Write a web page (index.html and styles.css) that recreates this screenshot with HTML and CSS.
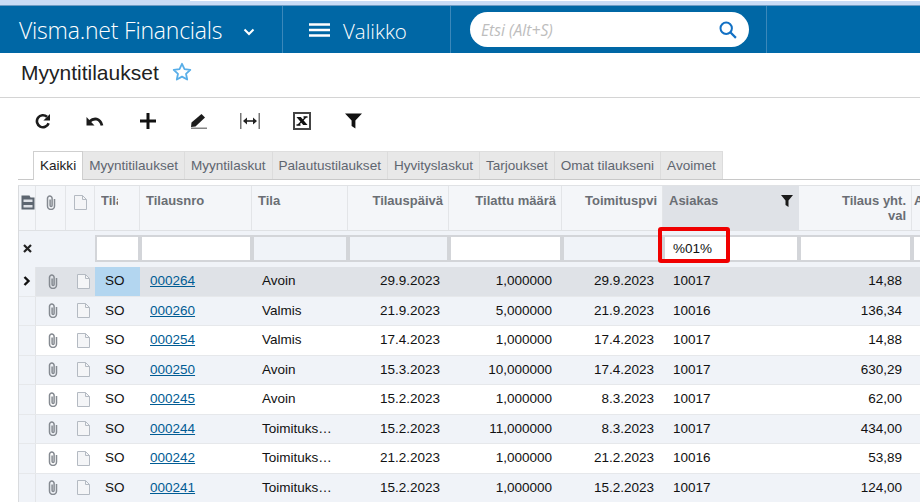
FILE: index.html
```html
<!DOCTYPE html>
<html lang="fi">

<head>
  <meta charset="UTF-8" />
  <title>Myyntitilaukset</title>
  <link rel="stylesheet" href="styles.css">
</head>

<body>

  <svg class="defs" width="0" height="0">
    <symbol id="clip" viewBox="0 0 10 15">
      <path d="M8.500 4v7a3.500 3.500 0 0 1-7 0V3.300a2.300 2.300 0 0 1 4.600 0v7.200a1 1 0 0 1-2 0V4.500" fill="none" stroke="#858a91" stroke-width="1.500" />
    </symbol>
    <symbol id="doc" viewBox="0 0 13 15">
      <path d="M.5.5h8l4 4v10H.5z" fill="#f4f5f7" stroke="#b4bac2" />
      <path d="M8.500.5v4h4" fill="none" stroke="#b4bac2" />
    </symbol>
  </svg>

  <div class="topstrip"><span class="topstrip-white"></span></div>

  <header class="appbar">
    <div class="brand">
      <span class="brand-name">Visma.net Financials</span>
      <svg width="12" height="8" viewBox="0 0 12 8"><path d="M1.500 1.500 6 6l4.500-4.500" fill="none" stroke="#fff" stroke-width="2" /></svg>
    </div>
    <div class="menu">
      <svg width="21" height="14" viewBox="0 0 21 14"><path d="M0 1.500h21M0 7h21M0 12.500h21" stroke="#fff" stroke-width="2.400" /></svg>
      <span>Valikko</span>
    </div>
    <div class="searchwrap">
      <div class="search">
        <span class="search-text">Etsi (Alt+S)</span>
        <svg width="18" height="18" viewBox="0 0 18 18"><circle cx="7.200" cy="7.200" r="5.700" fill="none" stroke="#1170c4" stroke-width="2" /><path d="m11.300 11.300 5.600 5.600" stroke="#1170c4" stroke-width="2.200" /></svg>
      </div>
    </div>
    <div class="barrest"></div>
  </header>

  <div class="titlebar">
    <h1>Myyntitilaukset</h1>
    <svg width="20" height="19" viewBox="0 0 20 19"><path d="m10 1.800 2.500 5.300 5.800.7-4.300 4 1.200 5.700-5.200-2.900-5.200 2.900L6 11.800l-4.300-4 5.800-.7z" fill="none" stroke="#58aee8" stroke-width="1.800" stroke-linejoin="round" /></svg>
  </div>

  <div class="toolbar">
    <span class="tool"><svg width="16" height="16" viewBox="0 0 16 16"><path d="M13.600 10.200A6 6 0 1 1 12 3.800" fill="none" stroke="#1c1c1c" stroke-width="2.600" /><path d="M15 1v6.600H8.400z" fill="#1c1c1c" /></svg></span>
    <span class="tool"><svg width="18" height="12" viewBox="0 0 18 12"><path d="M3.500 6.500C8 2.500 14 3 16 10.500" fill="none" stroke="#1c1c1c" stroke-width="2.800" /><path d="M.5 2v8.500H8.500z" fill="#1c1c1c" /></svg></span>
    <span class="tool tool-plus"><svg width="16" height="16" viewBox="0 0 16 16"><path d="M8 0v16M0 8h16" stroke="#111" stroke-width="3" /></svg></span>
    <span class="tool"><svg width="17" height="16" viewBox="0 0 17 16"><path d="M11.500 1 15 4.500 5.500 13.500 1 14l.5-4.500z" fill="#1c1c1c" /><path d="M1 15.200h16" stroke="#666" stroke-width="1.200" /></svg></span>
    <span class="tool"><svg width="20" height="16" viewBox="0 0 20 16"><path d="M.8 0v16M19.200 0v16" stroke="#555" stroke-width="1.200" /><path d="M4 8h12" stroke="#222" stroke-width="1.600" /><path d="M7 4.500 3 8l4 3.500zM13 4.500l4 3.500-4 3.500z" fill="#222" /></svg></span>
    <span class="tool"><svg width="18" height="18" viewBox="0 0 18 18"><rect x="1" y="1" width="16" height="16" fill="#fff" stroke="#444" stroke-width="2" /><path d="M3.500 5h4.300l6.700 8h-4.300z" fill="#111" /><path d="M13 5 5 13M3.500 13h4M10.500 5h4" stroke="#111" stroke-width="1.300" /></svg></span>
    <span class="tool"><svg width="17" height="16" viewBox="0 0 17 16"><path d="M0 .5h17l-6.600 7v8l-3.800-2.500V7.500z" fill="#111" /></svg></span>
  </div>

  <nav class="tabs">
    <span class="tab active">Kaikki</span>
    <span class="tab">Myyntitilaukset</span>
    <span class="tab">Myyntilaskut</span>
    <span class="tab">Palautustilaukset</span>
    <span class="tab">Hyvityslaskut</span>
    <span class="tab">Tarjoukset</span>
    <span class="tab">Omat tilaukseni</span>
    <span class="tab">Avoimet</span>
  </nav>

  <div class="grid">
    <div class="row head">
      <div class="c stack"><svg class="h-ico" width="14" height="15" viewBox="0 0 14 15"><path d="M.5.5h8l1 2h4v12H.5z" fill="#5d6670" /><path d="M2.500 4.500h9v2.500h-9zM2.500 10h9v2.500h-9z" fill="#dfe2e7" /></svg></div>
      <div class="c"><svg class="h-ico" width="10" height="15"><use href="#clip" /></svg></div>
      <div class="c"><svg class="h-ico" width="13" height="15"><use href="#doc" /></svg></div>
      <div class="c l"><span class="cut">Tila</span></div>
      <div class="c l">Tilausnro</div>
      <div class="c l">Tila</div>
      <div class="c r">Tilauspäivä</div>
      <div class="c r">Tilattu määrä</div>
      <div class="c r">Toimituspvi</div>
      <div class="c l sorted">Asiakas
        <svg class="col-filter" width="12" height="12" viewBox="0 0 12 12"><path d="M0 0h12L7.500 5.500V12l-3-2V5.500z" fill="#1a1a1a" /></svg>
      </div>
      <div class="c r">Tilaus yht.<br>val</div>
      <div class="c edge">A</div>
    </div>

    <div class="row filter">
      <div class="c x"><svg width="9" height="9" viewBox="0 0 9 9"><path d="m1 1 7 7M8 1 1 8" stroke="#222" stroke-width="2.200" /></svg></div>
      <div class="c"></div>
      <div class="c"></div>
      <div class="c f"></div>
      <div class="c f"></div>
      <div class="c f off"></div>
      <div class="c f off"></div>
      <div class="c f"></div>
      <div class="c f off"></div>
      <div class="c f">%01%<span class="redbox"></span></div>
      <div class="c f"></div>
      <div class="c f"></div>
    </div>

    <div class="row data current">
      <div class="c mark"><svg width="8" height="10" viewBox="0 0 8 10"><path d="m1.500 1 4 4-4 4" fill="none" stroke="#111" stroke-width="2.400" /></svg></div>
      <div class="c i"><svg width="10" height="15"><use href="#clip" /></svg></div>
      <div class="c d"><svg width="13" height="15"><use href="#doc" /></svg></div>
      <div class="c so">SO</div>
      <div class="c"><a href="#">000264</a></div>
      <div class="c">Avoin</div>
      <div class="c n">29.9.2023</div>
      <div class="c n wide">1,000000</div>
      <div class="c n">29.9.2023</div>
      <div class="c">10017</div>
      <div class="c n wide">14,88</div>
      <div class="c"></div>
    </div>

    <div class="row data alt">
      <div class="c mark"></div>
      <div class="c i"><svg width="10" height="15"><use href="#clip" /></svg></div>
      <div class="c d"><svg width="13" height="15"><use href="#doc" /></svg></div>
      <div class="c">SO</div>
      <div class="c"><a href="#">000260</a></div>
      <div class="c">Valmis</div>
      <div class="c n">21.9.2023</div>
      <div class="c n wide">5,000000</div>
      <div class="c n">21.9.2023</div>
      <div class="c">10016</div>
      <div class="c n wide">136,34</div>
      <div class="c"></div>
    </div>

    <div class="row data">
      <div class="c mark"></div>
      <div class="c i"><svg width="10" height="15"><use href="#clip" /></svg></div>
      <div class="c d"><svg width="13" height="15"><use href="#doc" /></svg></div>
      <div class="c">SO</div>
      <div class="c"><a href="#">000254</a></div>
      <div class="c">Valmis</div>
      <div class="c n">17.4.2023</div>
      <div class="c n wide">1,000000</div>
      <div class="c n">17.4.2023</div>
      <div class="c">10017</div>
      <div class="c n wide">14,88</div>
      <div class="c"></div>
    </div>

    <div class="row data alt">
      <div class="c mark"></div>
      <div class="c i"><svg width="10" height="15"><use href="#clip" /></svg></div>
      <div class="c d"><svg width="13" height="15"><use href="#doc" /></svg></div>
      <div class="c">SO</div>
      <div class="c"><a href="#">000250</a></div>
      <div class="c">Avoin</div>
      <div class="c n">15.3.2023</div>
      <div class="c n wide">10,000000</div>
      <div class="c n">17.4.2023</div>
      <div class="c">10017</div>
      <div class="c n wide">630,29</div>
      <div class="c"></div>
    </div>

    <div class="row data">
      <div class="c mark"></div>
      <div class="c i"><svg width="10" height="15"><use href="#clip" /></svg></div>
      <div class="c d"><svg width="13" height="15"><use href="#doc" /></svg></div>
      <div class="c">SO</div>
      <div class="c"><a href="#">000245</a></div>
      <div class="c">Avoin</div>
      <div class="c n">15.2.2023</div>
      <div class="c n wide">1,000000</div>
      <div class="c n">8.3.2023</div>
      <div class="c">10017</div>
      <div class="c n wide">62,00</div>
      <div class="c"></div>
    </div>

    <div class="row data alt">
      <div class="c mark"></div>
      <div class="c i"><svg width="10" height="15"><use href="#clip" /></svg></div>
      <div class="c d"><svg width="13" height="15"><use href="#doc" /></svg></div>
      <div class="c">SO</div>
      <div class="c"><a href="#">000244</a></div>
      <div class="c">Toimituks…</div>
      <div class="c n">15.2.2023</div>
      <div class="c n wide">11,000000</div>
      <div class="c n">8.3.2023</div>
      <div class="c">10017</div>
      <div class="c n wide">434,00</div>
      <div class="c"></div>
    </div>

    <div class="row data">
      <div class="c mark"></div>
      <div class="c i"><svg width="10" height="15"><use href="#clip" /></svg></div>
      <div class="c d"><svg width="13" height="15"><use href="#doc" /></svg></div>
      <div class="c">SO</div>
      <div class="c"><a href="#">000242</a></div>
      <div class="c">Toimituks…</div>
      <div class="c n">21.2.2023</div>
      <div class="c n wide">1,000000</div>
      <div class="c n">21.2.2023</div>
      <div class="c">10016</div>
      <div class="c n wide">53,89</div>
      <div class="c"></div>
    </div>

    <div class="row data alt">
      <div class="c mark"></div>
      <div class="c i"><svg width="10" height="15"><use href="#clip" /></svg></div>
      <div class="c d"><svg width="13" height="15"><use href="#doc" /></svg></div>
      <div class="c">SO</div>
      <div class="c"><a href="#">000241</a></div>
      <div class="c">Toimituks…</div>
      <div class="c n">15.2.2023</div>
      <div class="c n wide">1,000000</div>
      <div class="c n">15.2.2023</div>
      <div class="c">10017</div>
      <div class="c n wide">124,00</div>
      <div class="c"></div>
    </div>
  </div>

</body>

</html>
```

FILE: styles.css
```css
html,
body {
  margin: 0;
  height: 502px;
  overflow: hidden;
  background-color: #fff;
  font-family: "Liberation Sans", Arial, sans-serif;
  color: #111;
}

.defs {
  display: block;
  height: 0;
}

/* Top */
.topstrip {
  height: 6px;
  background-color: #c9dcf6;
  border-bottom: 1px solid #6f9cc4;
  box-sizing: border-box;
  padding-left: 190px;
}

.topstrip-white {
  display: block;
  height: 1px;
  background-color: #fff;
}

.appbar {
  display: flex;
  height: 47px;
  background-color: #0067a5;
  color: #fff;
  font-family: "Open Sans", sans-serif;
}

.brand {
  width: 283px;
  box-sizing: border-box;
  padding-left: 19px;
  display: flex;
  align-items: center;
  gap: 21px;
  border-right: 1px solid #3b88ba;
}

.brand-name {
  font-size: 23px;
  font-weight: 300;
  letter-spacing: -0.2px;
}

.brand svg {
  margin-top: 5px;
}

.menu {
  width: 168px;
  box-sizing: border-box;
  padding-left: 26px;
  display: flex;
  align-items: center;
  gap: 13px;
  font-size: 20.500px;
  font-weight: 300;
  border-right: 1px solid #3b88ba;
}

.menu span {
  margin-top: 2px;
}

.searchwrap {
  width: 316px;
  box-sizing: border-box;
  padding: 6px 0 0 19px;
  border-right: 1px solid #3b88ba;
}

.search {
  width: 279px;
  height: 35px;
  box-sizing: border-box;
  padding: 0 12px 0 11px;
  border-radius: 18px;
  background-color: #fff;
  display: flex;
  align-items: center;
  justify-content: space-between;
}

.search-text {
  color: #bdbdbd;
  font-size: 15.700px;
  font-style: italic;
}

.barrest {
  flex: 1;
  background-color: #006aaa;
}

.titlebar {
  height: 45px;
  box-sizing: border-box;
  border-bottom: 1px solid #d4d4d4;
  padding: 8px 0 0 21px;
  display: flex;
  align-items: flex-start;
  gap: 13px;
}

.titlebar h1 {
  margin: 0;
  font-size: 21px;
  font-weight: 400;
  line-height: 23px;
  color: #222;
}

.titlebar svg {
  margin-top: 1px;
}

/* Toolbar */
.toolbar {
  height: 53px;
  display: flex;
  padding-left: 17px;
  padding-top: 14px;
  box-sizing: border-box;
}

.tool {
  width: 51.800px;
  height: 18px;
  display: flex;
  align-items: center;
  justify-content: center;
  flex: none;
}

.tool-plus svg {
  margin-left: 3px;
}

/* Tabs */
.tabs {
  display: flex;
  height: 29px;
  box-sizing: border-box;
  margin-left: 18px;
  padding-left: 15px;
  border-bottom: 1px solid #c8c8c8;
}

.tab {
  height: 28px;
  box-sizing: border-box;
  padding: 0 6px;
  border-top: 1px solid #dedede;
  border-right: 1px solid #dcdcdc;
  background-color: #e8e8e8;
  color: #5f6670;
  font-size: 13.550px;
  line-height: 27px;
}

.tab.active {
  height: 29px;
  background-color: #fff;
  color: #222;
  border: 1px solid #cfcfcf;
  border-bottom: none;
}

/* Grid */
.grid {
  margin-left: 18px;
  margin-top: 5px;
  border-top: 1px solid #e0e2e5;
  border-left: 1px solid #d9dbde;
}

.row {
  display: grid;
  grid-template-columns: 17px 30px 29px 45px 112px 96px 101px 113px 101px 136px 113px 40px;
}

.c {
  box-sizing: border-box;
  min-width: 0;
  overflow: hidden;
  white-space: nowrap;
}

.head {
  height: 45px;
  background-color: #f4f6f9;
  border-bottom: 1px solid #dfe1e4;
  box-sizing: border-box;
  color: #6a6e74;
  font-size: 13px;
  font-weight: 700;
}

.head .c {
  border-right: 1px solid #e3e5e8;
  padding-top: 7px;
  line-height: 15px;
  position: relative;
}

.head .stack {
  padding-left: 2px;
}

.head .l {
  padding-left: 6px;
}

.head .r {
  padding-right: 5px;
  text-align: right;
}

.head .edge {
  padding-left: 2px;
  border-right: none;
}

.head .sorted {
  background-color: #dfe2e7;
  border-right: none;
}

.cut {
  display: block;
  width: 17px;
  overflow: hidden;
}

.h-ico {
  display: block;
  margin: 2px auto 0;
}

.col-filter {
  position: absolute;
  top: 9px;
  right: 6px;
}

.filter {
  height: 36px;
  background-color: #f0f3f8;
  box-sizing: border-box;
  padding: 4px 0 5px;
}

.filter .x {
  display: flex;
  align-items: center;
  justify-content: center;
}

.filter .f {
  background-color: #fff;
  border: 2px solid #d3d5d9;
  padding-left: 8px;
  font-size: 13.500px;
  line-height: 23px;
  overflow: visible;
  position: relative;
}

.filter .off {
  background-color: #f0f3f8;
}

.redbox {
  position: absolute;
  left: -7px;
  top: -10px;
  width: 72px;
  height: 36px;
  box-sizing: border-box;
  border: 4px solid #f00000;
  border-radius: 3px;
}

.data {
  height: 29.500px;
  box-sizing: border-box;
  border-bottom: 1px solid #e6e8eb;
  font-size: 13.500px;
  line-height: 28.500px;
  background-color: #fff;
}

.data .c {
  padding-left: 10px;
}

.data .n {
  padding: 0 9px 0 0;
  text-align: right;
}

.data .wide {
  padding-right: 10px;
}

.data .mark {
  padding: 0;
  display: flex;
  align-items: center;
  justify-content: center;
  background-color: #f0f3f8;
  border-right: 1px solid #e3e5e8;
}

.data .i,
.data .d {
  display: flex;
  align-items: center;
  justify-content: center;
}

.data .i {
  padding: 0 0 0 3px;
}

.data .d {
  padding: 0 0 0 5px;
}

.alt {
  background-color: #f0f3f8;
}

.current {
  background-color: #dfe2e7;
}

.current .so {
  background-color: #b3d6f0;
}

.data a {
  color: #005c94;
  text-decoration: underline;
}
```
